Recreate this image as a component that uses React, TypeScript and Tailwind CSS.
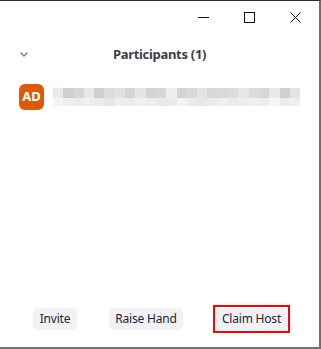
import React from "react";

const topRow = [
  "#ebe9e9", "#cfcfd1", "#d6d6d9", "#e8e8ea", "#d0d0d2", "#dcdcde", "#e2e2e4", "#d4d4d6",
  "#e4e4ea", "#d2d2d0", "#d6d6d6", "#efefef", "#d4d4d8", "#d8d8da", "#e4e4e2", "#d6d6dc",
  "#d8d8de", "#dcdcdf", "#e6e6e8", "#dcdcd8", "#d4d8dc", "#e8e8e8", "#d0d0d0", "#e4e4e8",
];
const bottomRow = [
  "#f4f4f4", "#efefef", "#ececee", "#f0f0f2", "#ebebeb", "#e6e6e8", "#eeeeee", "#ececec",
  "#f0f0f0", "#eeeeef", "#e8e8ea", "#eaeaea", "#f2f2f4", "#ebebed", "#e6e6e6", "#ececee",
  "#f0f0f0", "#eaeaec", "#ececec", "#f0f0f0", "#eeeeee", "#f6f6f6", "#ececec", "#efefef",
];

const BlurredName = () => (
  <div className="flex flex-col w-[247px]">
    <div className="flex h-[10px]">
      {topRow.map((c, i) => (
        <div key={i} className="flex-1" style={{ backgroundColor: c }} />
      ))}
    </div>
    <div className="flex h-[8px]">
      {bottomRow.map((c, i) => (
        <div key={i} className="flex-1" style={{ backgroundColor: c }} />
      ))}
    </div>
  </div>
);

const Btn = ({ label, w }: { label: string; w: string }) => (
  <button
    className={`h-[22px] rounded-[5px] bg-[#f2f2f6] text-[12px] tracking-[-0.2px] text-[#232333] flex items-center justify-center ${w}`}
  >
    {label}
  </button>
);

export default function App() {
  return (
    <div
      className="w-[321px] h-[349px] bg-white flex flex-col border-t border-[#2e2e32] border-r-2 border-b-2 border-r-[#6f6f6f] border-b-[#6f6f6f]"
      style={{ fontFamily: '"Noto Sans", "Open Sans", sans-serif' }}
    >
      {/* title bar */}
      <div className="h-[33px] flex items-center justify-end">
        <div className="w-[46px] h-full flex items-center justify-center">
          <svg width="11" height="11" viewBox="0 0 11 11">
            <path d="M0 5.5h11" stroke="#111" strokeWidth="1" />
          </svg>
        </div>
        <div className="w-[46px] h-full flex items-center justify-center">
          <svg width="11" height="11" viewBox="0 0 11 11">
            <rect x="0.5" y="0.5" width="10" height="10" fill="none" stroke="#111" strokeWidth="1" />
          </svg>
        </div>
        <div className="w-[46px] h-full flex items-center justify-center mr-[1px]">
          <svg width="11" height="11" viewBox="0 0 11 11">
            <path d="M0.5 0.5l10 10M10.5 0.5l-10 10" stroke="#111" strokeWidth="1" />
          </svg>
        </div>
      </div>

      {/* header */}
      <div className="relative h-[38px] flex items-center justify-center pt-[3px]">
        <svg
          className="absolute left-[20px] top-[18px]"
          width="8"
          height="5"
          viewBox="0 0 8 5"
        >
          <path d="M0.5 0.5l3.5 3.5l3.5-3.5" fill="none" stroke="#7d7d8c" strokeWidth="1.4" />
        </svg>
        <span className="text-[13px] font-bold tracking-[-0.3px] text-[#3d3d4b]">Participants (1)</span>
      </div>

      {/* participant row */}
      <div className="flex items-center gap-[9px] pl-[19px] mt-[12px]">
        <div className="w-[25px] h-[26px] rounded-[6px] bg-[#dc5a09] flex items-center justify-center text-white text-[13px] font-bold">
          AD
        </div>
        <BlurredName />
      </div>

      <div className="flex-1" />

      {/* footer buttons */}
      <div className="flex items-center pl-[33px] gap-[32px] mb-[14px]">
        <Btn label="Invite" w="w-[44px]" />
        <Btn label="Raise Hand" w="w-[74px]" />
        <div className="border-2 border-[#ff0000] p-[1px] -ml-[2px]">
          <Btn label="Claim Host" w="w-[71px]" />
        </div>
      </div>
    </div>
  );
}
